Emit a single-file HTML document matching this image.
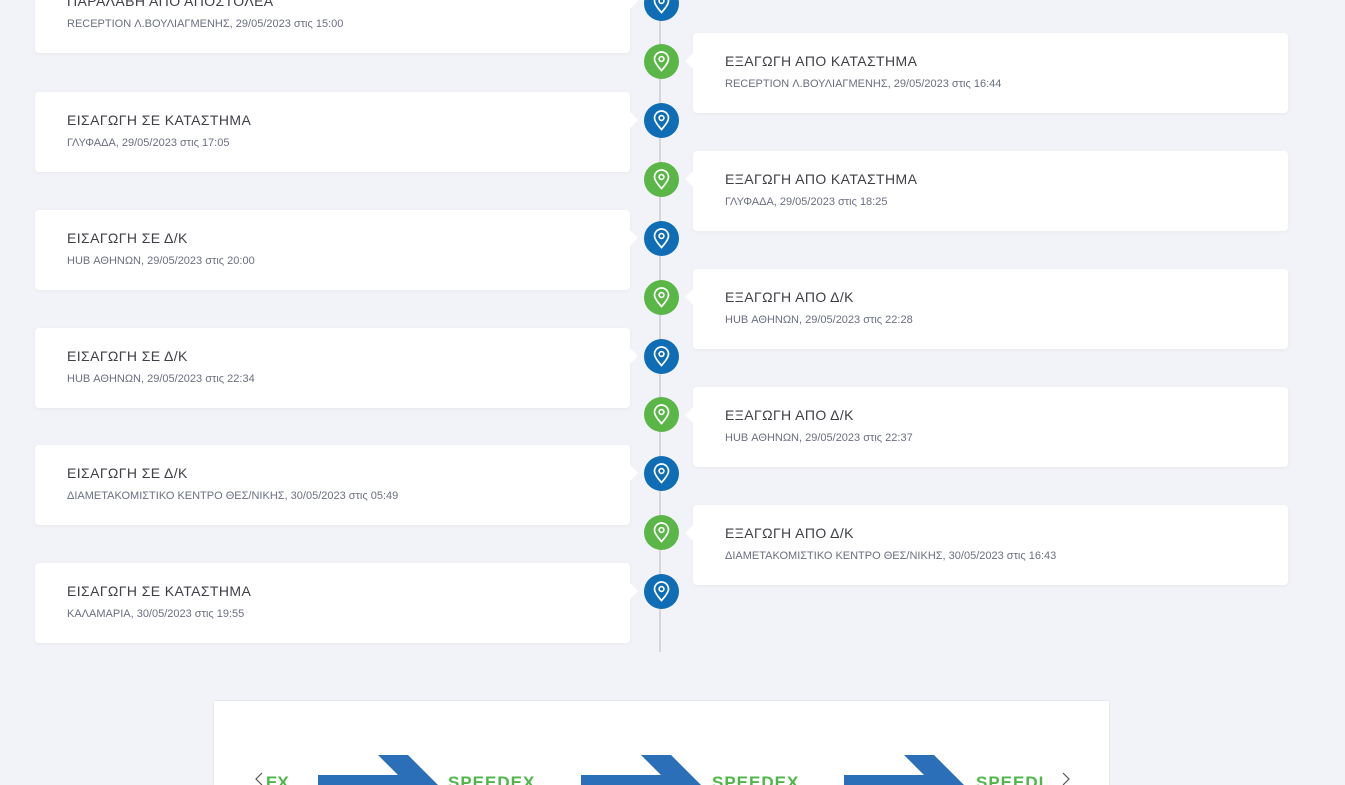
<!DOCTYPE html><html><head><meta charset="utf-8"><style>
html,body{margin:0;width:1345px;height:785px;overflow:hidden}
body{background:#f2f3f8;position:relative;font-family:"Liberation Sans","DejaVu Sans",sans-serif}
.line{position:absolute;left:659px;top:0;width:2px;height:652px;background:#d4d6dc}
.card{position:absolute;width:595px;height:80px;background:#fff;border-radius:4px;box-shadow:0 1px 4px rgba(0,0,0,.05)}
.card.l{left:35px}.card.r{left:693px}
.card .t{position:absolute;left:32px;top:20px;font-size:14px;color:#3f4047;letter-spacing:.4px}
.card .s{position:absolute;left:32px;top:45px;font-size:11px;color:#6b6f82}
.card.l:after{content:"";position:absolute;right:-8px;top:20px;border:8px solid transparent;border-left-color:#fff;border-right:0}
.card.r:before{content:"";position:absolute;left:-8px;top:20px;border:8px solid transparent;border-right-color:#fff;border-left:0}
.c{position:absolute;left:644px;width:35px;height:35px;border-radius:50%}
.c.b{background:#0f6db5}.c.g{background:#5bb648}
.c svg{position:absolute;left:9px;top:7px}
.box{position:absolute;left:214px;top:701px;width:895px;height:84px;background:#fff;box-shadow:0 0 2px rgba(0,0,0,.15);overflow:hidden}
</style></head><body>
<div class="line"></div>
<div class="card l" style="top:-27px"><div class="t">ΠΑΡΑΛΑΒΗ ΑΠΟ ΑΠΟΣΤΟΛΕΑ</div><div class="s">RECEPTION Λ.ΒΟΥΛΙΑΓΜΕΝΗΣ, 29/05/2023 στις 15:00</div></div>
<div class="card r" style="top:33px"><div class="t">ΕΞΑΓΩΓΗ ΑΠΟ ΚΑΤΑΣΤΗΜΑ</div><div class="s">RECEPTION Λ.ΒΟΥΛΙΑΓΜΕΝΗΣ, 29/05/2023 στις 16:44</div></div>
<div class="card l" style="top:92px"><div class="t">ΕΙΣΑΓΩΓΗ ΣΕ ΚΑΤΑΣΤΗΜΑ</div><div class="s">ΓΛΥΦΑΔΑ, 29/05/2023 στις 17:05</div></div>
<div class="card r" style="top:151px"><div class="t">ΕΞΑΓΩΓΗ ΑΠΟ ΚΑΤΑΣΤΗΜΑ</div><div class="s">ΓΛΥΦΑΔΑ, 29/05/2023 στις 18:25</div></div>
<div class="card l" style="top:210px"><div class="t">ΕΙΣΑΓΩΓΗ ΣΕ Δ/Κ</div><div class="s">HUB ΑΘΗΝΩΝ, 29/05/2023 στις 20:00</div></div>
<div class="card r" style="top:269px"><div class="t">ΕΞΑΓΩΓΗ ΑΠΟ Δ/Κ</div><div class="s">HUB ΑΘΗΝΩΝ, 29/05/2023 στις 22:28</div></div>
<div class="card l" style="top:328px"><div class="t">ΕΙΣΑΓΩΓΗ ΣΕ Δ/Κ</div><div class="s">HUB ΑΘΗΝΩΝ, 29/05/2023 στις 22:34</div></div>
<div class="card r" style="top:387px"><div class="t">ΕΞΑΓΩΓΗ ΑΠΟ Δ/Κ</div><div class="s">HUB ΑΘΗΝΩΝ, 29/05/2023 στις 22:37</div></div>
<div class="card l" style="top:445px"><div class="t">ΕΙΣΑΓΩΓΗ ΣΕ Δ/Κ</div><div class="s">ΔΙΑΜΕΤΑΚΟΜΙΣΤΙΚΟ ΚΕΝΤΡΟ ΘΕΣ/ΝΙΚΗΣ, 30/05/2023 στις 05:49</div></div>
<div class="card r" style="top:505px"><div class="t">ΕΞΑΓΩΓΗ ΑΠΟ Δ/Κ</div><div class="s">ΔΙΑΜΕΤΑΚΟΜΙΣΤΙΚΟ ΚΕΝΤΡΟ ΘΕΣ/ΝΙΚΗΣ, 30/05/2023 στις 16:43</div></div>
<div class="card l" style="top:563px"><div class="t">ΕΙΣΑΓΩΓΗ ΣΕ ΚΑΤΑΣΤΗΜΑ</div><div class="s">ΚΑΛΑΜΑΡΙΑ, 30/05/2023 στις 19:55</div></div>

<div class="c b" style="top:-14px"><svg width="17" height="21" viewBox="0 0 17 21"><path d="M8.5 19.5C4 14.5 1.5 11 1.5 8a7 7 0 0 1 14 0c0 3-2.5 6.5-7 11.5z" fill="none" stroke="#fff" stroke-width="1.7"/><circle cx="8.5" cy="8" r="2.4" fill="none" stroke="#fff" stroke-width="1.6"/></svg></div>
<div class="c g" style="top:44px"><svg width="17" height="21" viewBox="0 0 17 21"><path d="M8.5 19.5C4 14.5 1.5 11 1.5 8a7 7 0 0 1 14 0c0 3-2.5 6.5-7 11.5z" fill="none" stroke="#fff" stroke-width="1.7"/><circle cx="8.5" cy="8" r="2.4" fill="none" stroke="#fff" stroke-width="1.6"/></svg></div>
<div class="c b" style="top:103px"><svg width="17" height="21" viewBox="0 0 17 21"><path d="M8.5 19.5C4 14.5 1.5 11 1.5 8a7 7 0 0 1 14 0c0 3-2.5 6.5-7 11.5z" fill="none" stroke="#fff" stroke-width="1.7"/><circle cx="8.5" cy="8" r="2.4" fill="none" stroke="#fff" stroke-width="1.6"/></svg></div>
<div class="c g" style="top:162px"><svg width="17" height="21" viewBox="0 0 17 21"><path d="M8.5 19.5C4 14.5 1.5 11 1.5 8a7 7 0 0 1 14 0c0 3-2.5 6.5-7 11.5z" fill="none" stroke="#fff" stroke-width="1.7"/><circle cx="8.5" cy="8" r="2.4" fill="none" stroke="#fff" stroke-width="1.6"/></svg></div>
<div class="c b" style="top:221px"><svg width="17" height="21" viewBox="0 0 17 21"><path d="M8.5 19.5C4 14.5 1.5 11 1.5 8a7 7 0 0 1 14 0c0 3-2.5 6.5-7 11.5z" fill="none" stroke="#fff" stroke-width="1.7"/><circle cx="8.5" cy="8" r="2.4" fill="none" stroke="#fff" stroke-width="1.6"/></svg></div>
<div class="c g" style="top:280px"><svg width="17" height="21" viewBox="0 0 17 21"><path d="M8.5 19.5C4 14.5 1.5 11 1.5 8a7 7 0 0 1 14 0c0 3-2.5 6.5-7 11.5z" fill="none" stroke="#fff" stroke-width="1.7"/><circle cx="8.5" cy="8" r="2.4" fill="none" stroke="#fff" stroke-width="1.6"/></svg></div>
<div class="c b" style="top:339px"><svg width="17" height="21" viewBox="0 0 17 21"><path d="M8.5 19.5C4 14.5 1.5 11 1.5 8a7 7 0 0 1 14 0c0 3-2.5 6.5-7 11.5z" fill="none" stroke="#fff" stroke-width="1.7"/><circle cx="8.5" cy="8" r="2.4" fill="none" stroke="#fff" stroke-width="1.6"/></svg></div>
<div class="c g" style="top:397px"><svg width="17" height="21" viewBox="0 0 17 21"><path d="M8.5 19.5C4 14.5 1.5 11 1.5 8a7 7 0 0 1 14 0c0 3-2.5 6.5-7 11.5z" fill="none" stroke="#fff" stroke-width="1.7"/><circle cx="8.5" cy="8" r="2.4" fill="none" stroke="#fff" stroke-width="1.6"/></svg></div>
<div class="c b" style="top:456px"><svg width="17" height="21" viewBox="0 0 17 21"><path d="M8.5 19.5C4 14.5 1.5 11 1.5 8a7 7 0 0 1 14 0c0 3-2.5 6.5-7 11.5z" fill="none" stroke="#fff" stroke-width="1.7"/><circle cx="8.5" cy="8" r="2.4" fill="none" stroke="#fff" stroke-width="1.6"/></svg></div>
<div class="c g" style="top:515px"><svg width="17" height="21" viewBox="0 0 17 21"><path d="M8.5 19.5C4 14.5 1.5 11 1.5 8a7 7 0 0 1 14 0c0 3-2.5 6.5-7 11.5z" fill="none" stroke="#fff" stroke-width="1.7"/><circle cx="8.5" cy="8" r="2.4" fill="none" stroke="#fff" stroke-width="1.6"/></svg></div>
<div class="c b" style="top:574px"><svg width="17" height="21" viewBox="0 0 17 21"><path d="M8.5 19.5C4 14.5 1.5 11 1.5 8a7 7 0 0 1 14 0c0 3-2.5 6.5-7 11.5z" fill="none" stroke="#fff" stroke-width="1.7"/><circle cx="8.5" cy="8" r="2.4" fill="none" stroke="#fff" stroke-width="1.6"/></svg></div>

<div class="box">
<svg width="895" height="84" style="position:absolute;left:0;top:0">
<path d="M48 72l-6 6 6 6" fill="none" stroke="#555" stroke-width="1.2"/>
<path d="M849 72l6 6-6 6" fill="none" stroke="#555" stroke-width="1.2"/>
<path d="M104 74h80l-20-20h30l34 34H104z" fill="#2a6fb7"/>
<path d="M367 74h80l-20-20h30l34 34H367z" fill="#2a6fb7"/>
<path d="M630 74h80l-20-20h30l34 34H630z" fill="#2a6fb7"/>
<text x="52" y="87" font-family="Liberation Sans" font-weight="bold" font-size="17" fill="#4eb748">EX</text>
<text x="234" y="87" font-family="Liberation Sans" font-weight="bold" font-size="17" letter-spacing="1" fill="#4eb748">SPEEDEX</text>
<text x="498" y="87" font-family="Liberation Sans" font-weight="bold" font-size="17" letter-spacing="1" fill="#4eb748">SPEEDEX</text>
<text x="762" y="87" font-family="Liberation Sans" font-weight="bold" font-size="17" letter-spacing="1" fill="#4eb748">SPEEDI</text>
</svg>
</div>
</body></html>
